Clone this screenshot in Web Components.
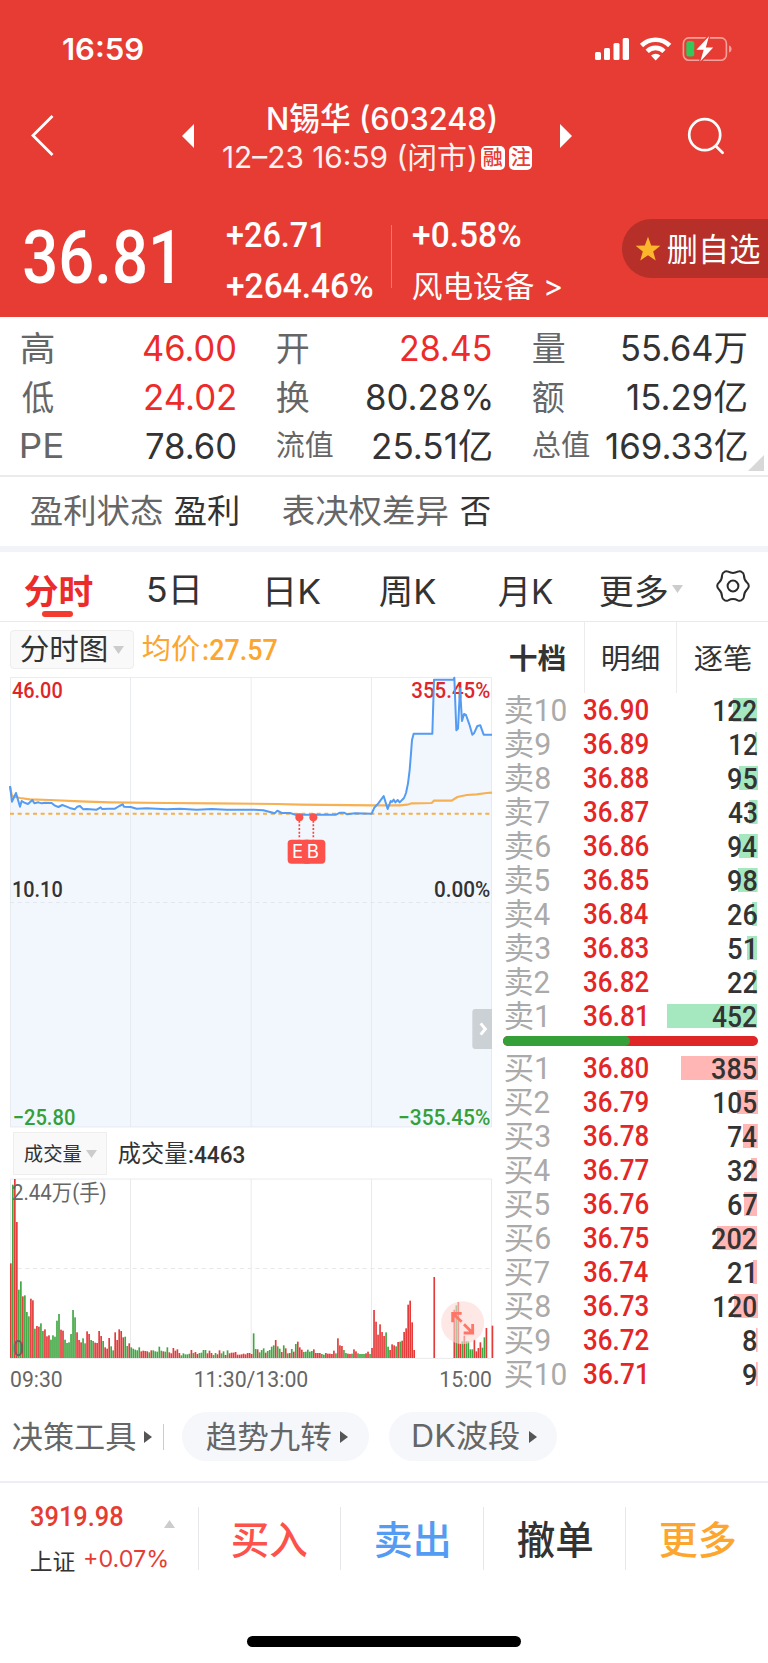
<!DOCTYPE html>
<html lang="zh-CN">
<head>
<meta charset="utf-8">
<title>N锡华 (603248)</title>
<style>
	body {
		margin: 0;
		background: #fff;
		color: #333;
		font-family: Inter, "Noto Sans CJK SC", sans-serif;
	}
</style>
</head>
<body>
<stock-page></stock-page>
<script>
const DIN = 'Roboto, "Noto Sans CJK SC", sans-serif';

// text squeezed or stretched so that its ink is `w` px wide
class FitText extends HTMLElement {
	constructor() {
		super();
		this.attachShadow({ mode: 'open' });
		this.shadowRoot.innerHTML = `
			<style>
				:host {
					display: block;
					flex: none;
					line-height: 1.2;
					white-space: nowrap;
				}
				span {
					display: inline-block;
					transform-origin: 0 50%;
				}
			</style>
			<span><slot></slot></span>
		`;
	}

	connectedCallback() {
		const w = Number(this.getAttribute('w'));
		const text = this.textContent;
		this.style.width = w + 'px';
		this.style.fontSize = this.getAttribute('size') + 'px';
		this.style.height = this.getAttribute('size') * 1.2 + 'px';
		this.style.fontWeight = this.getAttribute('weight') || 400;
		if (this.hasAttribute('din')) this.style.fontFamily = DIN;
		if (this.hasAttribute('color')) this.style.color = this.getAttribute('color');
		const cs = getComputedStyle(this);
		const ctx = FitText.ctx;
		ctx.font = `${cs.fontWeight} ${cs.fontSize} ${cs.fontFamily}`;
		const m = ctx.measureText(text);
		const k = w / (m.actualBoundingBoxLeft + m.actualBoundingBoxRight);
		// han glyphs sit a little high in a latin line box
		const han = /^[\u4e00-\u9fff]/.test(text);
		const dx = m.actualBoundingBoxLeft * k - (han ? .2 : 0);
		const dy = han ? .045 : this.hasAttribute('din') ? .025 : 0;
		this.shadowRoot.querySelector('span').style.transform = `translate(${dx}px, ${dy}em) scaleX(${k})`;
	}
}
FitText.ctx = document.createElement('canvas').getContext('2d');

class StatusBar extends HTMLElement {
	constructor() {
		super();
		this.attachShadow({ mode: 'open' });
		this.shadowRoot.innerHTML = `
			<style>
				:host {
					display: flex;
					align-items: center;
					justify-content: space-between;
					height: 98px;
					padding: 0 36px 0 63px;
					color: #fff;
				}
			</style>
			<fit-text w="80" size="30" weight="600">16:59</fit-text>
			<svg width="138" height="28" viewBox="594 35 138 28" fill="#fff">
				<rect x="595" y="52" width="6" height="8" rx="1.5"/>
				<rect x="604" y="48" width="6" height="12" rx="1.5"/>
				<rect x="613.5" y="43" width="6" height="17" rx="1.5"/>
				<rect x="622.7" y="38" width="6.3" height="22" rx="1.5"/>
				<g fill="none" stroke="#fff" stroke-width="4.6">
					<path d="M641.5 45.5a20 20 0 0 1 28.2 0"/>
					<path d="M647.2 51.3a12 12 0 0 1 16.8 0"/>
				</g>
				<path d="M651 55.5a7 7 0 0 1 9.4 0l-4.7 4.9z"/>
				<rect x="683.4" y="37.9" width="43" height="22.4" rx="5.5" fill="none" stroke="#f3a19c" stroke-width="1.6"/>
				<path d="M729 45.5c3.4.8 3.4 6.2 0 7z" fill="#f3a19c"/>
				<rect x="686.3" y="41" width="8" height="15.6" rx="2.5" fill="#34c759"/>
				<path d="M709 36.2l-12.6 13.6h7.3l-3.4 11.8 12.9-14.1h-7.4z" stroke="#e63c33" stroke-width="2.6" paint-order="stroke"/>
			</svg>
		`;
	}
}

class StockNav extends HTMLElement {
	constructor() {
		super();
		this.attachShadow({ mode: 'open' });
		this.shadowRoot.innerHTML = `
			<style>
				:host {
					display: flex;
					align-items: center;
					height: 76px;
					padding: 0 43px 0 30px;
					color: #fff;
				}
				svg { flex: none; }
				.prev { margin-left: 128px; }
				.title {
					display: flex;
					flex-direction: column;
					width: 309px;
					margin: 4px 28px 0 29px;
				}
				.title > div {
					display: flex;
					align-items: center;
					height: 39px;
				}
				.name { padding-left: 45px; }
				.time fit-text { opacity: .93; }
				.badge {
					display: flex;
					align-items: center;
					justify-content: center;
					width: 23.5px;
					height: 24px;
					margin-left: 6px;
					border-radius: 5px;
					background: #fff;
				}
				.badge + .badge { margin-left: 4px; }
				.badge fit-text { opacity: 1; }
				.search { margin-left: auto; }
			</style>
			<svg width="24" height="44" viewBox="30 114 24 44" fill="none" stroke="#fff" stroke-width="2.8"><path d="M52.5 116L33 135.5 52.5 155"/></svg>
			<svg class="prev" width="12" height="24" viewBox="0 0 12 24" fill="#fff"><path d="M12 0v24L0 12z"/></svg>
			<div class="title">
				<div class="name"><fit-text w="227.5" size="31.5" weight="500">N锡华 (603248)</fit-text></div>
				<div class="time">
					<fit-text w="252" size="29.5">12–23 16:59 (闭市)</fit-text>
					<span class="badge"><fit-text w="19.5" size="20.5" weight="500" color="#e63c33">融</fit-text></span>
					<span class="badge"><fit-text w="19.5" size="20.5" weight="500" color="#e63c33">注</fit-text></span>
				</div>
			</div>
			<svg width="12" height="24" viewBox="0 0 12 24" fill="#fff"><path d="M0 0v24l12-12z"/></svg>
			<svg class="search" width="38" height="38" viewBox="687 117 38 38" fill="none" stroke="#fff" stroke-width="2.7" stroke-linecap="round"><circle cx="704.7" cy="134.7" r="15.5"/><path d="M715.8 146l6.8 6.8"/></svg>
		`;
	}
}

class PriceSummary extends HTMLElement {
	constructor() {
		super();
		this.attachShadow({ mode: 'open' });
		this.shadowRoot.innerHTML = `
			<style>
				:host {
					display: flex;
					align-items: flex-start;
					height: 108px;
					padding: 35px 0 0 24px;
					color: #fff;
				}
				.price {
					display: flex;
					align-items: center;
					width: 151px;
					height: 95px;
				}
				.col {
					display: flex;
					flex-direction: column;
				}
				.col > * {
					display: flex;
					align-items: center;
					height: 51.3px !important;
					line-height: 51.3px;
				}
				.change { margin-left: 52px; width: 164px; }
				.rule {
					width: 1px;
					height: 63px;
					margin: 16px 21px 0 0;
					background: #ee7771;
				}
				.remove {
					display: flex;
					align-items: center;
					gap: 7px;
					box-sizing: border-box;
					width: 146px;
					height: 59px;
					margin: 10px 0 0 auto;
					padding-left: 12.5px;
					border-radius: 30px 0 0 30px;
					background: #b63029;
				}
			</style>
			<div class="price"><fit-text din w="148" size="74" weight="500">36.81</fit-text></div>
			<div class="col change">
				<fit-text din w="94" size="35.5" weight="500">+26.71</fit-text>
				<fit-text din w="145.5" size="35.5" weight="500">+264.46%</fit-text>
			</div>
			<div class="rule"></div>
			<div class="col">
				<fit-text din w="107.5" size="35.5" weight="500">+0.58%</fit-text>
				<fit-text w="148.5" size="30">风电设备 &gt;</fit-text>
			</div>
			<div class="remove">
				<svg width="26" height="26" viewBox="0 0 26 26" fill="#fdb52b"><path d="M13 .8l3.2 8.6 9.2.4-7.2 5.7 2.5 8.9L13 19.3l-7.7 5.1 2.5-8.9L.6 9.8l9.2-.4z"/></svg>
				<fit-text w="92" size="31.5">删自选</fit-text>
			</div>
		`;
	}
}

class QuoteGrid extends HTMLElement {
	constructor() {
		super();
		this.attachShadow({ mode: 'open' });
		// label, label width, label size, value, value width, rising
		const cells = [
			['高', 31.5, 34, '46.00', 91, 1], ['开', 32, 34, '28.45', 90, 1], ['量', 32, 34, '55.64万', 124],
			['低', 31.5, 34, '24.02', 90, 1], ['换', 32, 34, '80.28%', 124], ['额', 32, 34, '15.29亿', 119],
			['PE', 40.5, 34.5, '78.60', 89], ['流值', 56, 29, '25.51亿', 118], ['总值', 56.5, 29, '169.33亿', 140.5],
		];
		this.shadowRoot.innerHTML = `
			<style>
				:host {
					position: relative;
					display: grid;
					grid-template-columns: 213px 213.5px 213px;
					grid-auto-rows: 49px;
					column-gap: 42.5px;
					box-sizing: border-box;
					height: 160px;
					padding: 6px 0 0 21.5px;
					border-bottom: 2px solid #ebebed;
				}
				div {
					display: flex;
					align-items: center;
					justify-content: space-between;
				}
				svg {
					position: absolute;
					right: 4px;
					bottom: 4px;
				}
			</style>
			${cells.map(c => `<div><fit-text w="${c[1]}" size="${c[2]}" color="#666">${c[0]}</fit-text><fit-text w="${c[4]}" size="35"${c[5] ? ' color="#ec2b2b"' : ''}>${c[3]}</fit-text></div>`).join('')}
			<svg width="16" height="16" viewBox="0 0 16 16"><path d="M16 0v16H0z" fill="#d8d8d8"/></svg>
		`;
	}
}

class FactsRow extends HTMLElement {
	constructor() {
		super();
		this.attachShadow({ mode: 'open' });
		this.shadowRoot.innerHTML = `
			<style>
				:host {
					display: flex;
					align-items: center;
					box-sizing: border-box;
					height: 75px;
					padding: 0 0 2px 30.5px;
					border-bottom: 6px solid #f1f3f8;
				}
				.v { margin: 0 44px 0 13px; }
			</style>
			<fit-text w="131.5" size="33" color="#666">盈利状态</fit-text>
			<fit-text class="v" w="63.5" size="33">盈利</fit-text>
			<fit-text w="165" size="33" color="#666">表决权差异</fit-text>
			<fit-text class="v" w="29.5" size="33">否</fit-text>
		`;
	}
}

class PeriodTabs extends HTMLElement {
	constructor() {
		super();
		this.attachShadow({ mode: 'open' });
		this.shadowRoot.innerHTML = `
			<style>
				:host {
					position: relative;
					display: flex;
					align-items: center;
					box-sizing: border-box;
					height: 70px;
					padding: 6px 0 0 24.5px;
					border-bottom: 1px solid #e9e9ec;
				}
				.gear { margin: -8px 0 0 33px; }
				.caret { margin: -2px 0 0 5px; }
				i {
					position: absolute;
					left: 42px;
					bottom: 4px;
					width: 31px;
					height: 6px;
					border-radius: 3px;
					background: #f43b30;
				}
			</style>
			<fit-text w="68" size="34.5" weight="700" color="#ec2b2b">分时</fit-text>
			<fit-text style="margin-left:55.5px" w="49.5" size="34.5">5日</fit-text>
			<fit-text style="margin-left:70px" w="53" size="34.5">日K</fit-text>
			<fit-text style="margin-left:59.5px" w="56.5" size="34.5">周K</fit-text>
			<fit-text style="margin-left:62.5px" w="54.5" size="34.5">月K</fit-text>
			<fit-text style="margin-left:46px" w="67.5" size="34.5">更多</fit-text>
			<svg class="caret" width="11" height="8" viewBox="0 0 11 8"><path d="M0 0h11L5.5 8z" fill="#ccc"/></svg>
			<svg class="gear" width="34" height="34" viewBox="-17 -17 34 34" fill="none" stroke="#2b2b2b" stroke-width="2" stroke-linejoin="round">
				<circle r="5.4"/>
				<path d="M-8.5 -14.2Q-7 -15.3 -4.8 -14.3Q0 -11.8 4.8 -14.3Q7 -15.3 8.5 -14.2Q10.8 -13 10.9 -10.8Q11 -6.2 14 -3.4Q15.8 -1.8 15.8 0Q15.8 1.8 14 3.4Q11 6.2 10.9 10.8Q10.8 13 8.5 14.2Q7 15.3 4.8 14.3Q0 11.8 -4.8 14.3Q-7 15.3 -8.5 14.2Q-10.8 13 -10.9 10.8Q-11 6.2 -14 3.4Q-15.8 1.8 -15.8 0Q-15.8 -1.8 -14 -3.4Q-11 -6.2 -10.9 -10.8Q-10.8 -13 -8.5 -14.2z"/>
			</svg>
			<i></i>
		`;
	}
}

class PriceChart extends HTMLElement {
	constructor() {
		super();
		this.attachShadow({ mode: 'open' });
		// three units to a pixel
		const price = '30,528 36,575 48,549 60,590 65,573 73,578 84,582 97,570 103,580 115,577 125,580 135,578 155,579 165,587 175,591 187,585 200,590 212,595 224,598 232,590 240,588 250,598 260,597 290,599 302,592 306,597 325,596 345,596 358,588 368,583 372,590 392,591 410,596 440,595 500,598 540,596 590,599 635,597 680,599 760,599 790,601 810,606 824,610 832,602 845,609 870,609 885,614 940,614 1008,614 1020,608 1032,608 1042,613 1065,610 1115,611 1123,593 1135,580 1151,558 1163,597 1172,573 1176,576 1181,569 1186,577 1193,570 1199,577 1212,564 1218,549 1224,520 1229,480 1233,430 1236,390 1241,371 1297,371 1302,209 1361,209 1363,203 1369,361 1374,356 1380,235 1386,333 1392,312 1398,315 1408,343 1417,374 1422,370 1432,348 1441,346 1451,374 1476,374';
		const average = '30,530 36,558 60,564 90,568 150,570 240,574 330,577 500,579 640,580 830,582 900,584 1120,586 1200,586 1222,584 1235,580 1295,579 1302,572 1355,572 1372,561 1400,555 1430,553 1460,549 1476,548';
		this.shadowRoot.innerHTML = `
			<style>
				:host { display: block; height: 451px; margin-left: 10px; }
				svg { display: block; overflow: visible; }
				text { font: 500 67.5px ${DIN}; }
				.up { fill: #e0252a; }
				.down { fill: #36a038; }
				.mark { font: 400 56px Inter, sans-serif; fill: #fff; }
			</style>
			<svg width="482" height="451" viewBox="30 201 1446 1353">
				<path d="M${price.replace(/ /g, 'L')}V1551H30z" fill="#f2f7fe"/>
				<path d="M31.5 202.5H1474.5V1551H31.5zM391.5 202V1551M753.5 202V1551M1114.5 202V1551" fill="none" stroke="#e3e7ec" stroke-opacity=".8" stroke-width="3"/>
				<path d="M30 877.5H1476" stroke="#e3e6ea" stroke-width="3" stroke-dasharray="12 11"/>
				<path d="M30 611H1476" stroke="#f7ae45" stroke-width="6" stroke-dasharray="12 11"/>
				<text class="up" x="36" y="264" textLength="152" lengthAdjust="spacingAndGlyphs">46.00</text>
				<text class="up" x="1234" y="264" textLength="237" lengthAdjust="spacingAndGlyphs">355.45%</text>
				<polyline points="${average}" fill="none" stroke="#f7b052" stroke-width="6.5"/>
				<polyline points="${price}" fill="none" stroke="#539bf3" stroke-width="6" stroke-linejoin="round"/>
				<text x="36" y="861" fill="#333" textLength="152" lengthAdjust="spacingAndGlyphs">10.10</text>
				<text x="1302" y="861" fill="#333" textLength="169" lengthAdjust="spacingAndGlyphs">0.00%</text>
				<text class="down" x="38" y="1545" textLength="188" lengthAdjust="spacingAndGlyphs">−25.80</text>
				<text class="down" x="1194" y="1545" textLength="277" lengthAdjust="spacingAndGlyphs">−355.45%</text>
				<path d="M898 632V688M940 632V688" stroke="#f5473f" stroke-width="5" stroke-dasharray="6 5"/>
				<g fill="#fd524b"><circle cx="898" cy="622" r="12"/><circle cx="940" cy="622" r="12"/>
				<rect x="863" y="689" width="72" height="72" rx="11"/></g>
				<text class="mark" x="876" y="743">E</text>
				<rect x="906" y="689" width="70" height="72" rx="11" fill="#fd524b"/>
				<text class="mark" x="920" y="745">B</text>
				<path d="M1476 1197H1426Q1417 1197 1417 1206V1308Q1417 1317 1426 1317H1476z" fill="#ccd1d5"/>
				<path d="M1442 1240L1456 1257 1442 1274" fill="none" stroke="#fff" stroke-width="9"/>
			</svg>
		`;
	}
}

class VolumeChart extends HTMLElement {
	constructor() {
		super();
		this.attachShadow({ mode: 'open' });
		// one bar per minute, r = up, g = down, "-" = no trade
		const bars = `r284 g520 r537 r408 g205 g230 r185 g188 g138 g125 r178 r173 g88 r96 r94 g104 g81 r86 r65 r68 g55 g68 g64 g112 g132 r85 r82 g55 g45 g47
			g72 g144 g122 r77 r54 r47 g59 g44 r80 r72 g54 g51 r46 r45 r81 r66 g51 r32 r28 r60 g35 g23 r77 r54 r86 r81 r62 g64 g36 r44
			g32 g28 g25 g23 g32 r20 r22 r21 r20 g17 r23 g23 g20 g19 g34 g22 r20 g19 g32 r17 r14 r30 r22 r26 r15 g8 g14 g11 g11 g13
			r24 g15 r18 r12 g15 g16 g24 g24 r14 r22 r15 g9 g15 r11 r23 g14 g20 r9 g23 r14 r16 r16 r18 r10 r10 r11 r13 r11 r15 r15
			r12 g74 g27 r26 g17 g24 g29 r16 g21 g24 g34 g38 r54 g35 g28 r18 g38 r29 g14 r15 g27 r19 g42 r49 r32 r25 g18 g19 g25 g19
			g21 r26 r15 r15 r15 g12 g10 r15 r13 r13 r12 r22 g14 r59 r38 r36 g24 g15 r13 r12 g13 r26 r20 g14 g12 g12 g12 r14 r19 g12
			r30 r144 r109 r70 r101 r78 r66 g77 g34 r24 r41 r38 g35 r48 g49 r52 r78 r89 r160 r172 r107 r24 - - - - - - - - -
			r243 - - - - - - - - - r145 g158 r168 r43 g50 r67 g50 g50 g26 g26 r55 r20 r30 r47 g31 g62 r90 - - r97`.split(/\s+/);
		const shapes = bars.map((b, i) => {
			if (b === '-') return '';
			const h = Number(b.slice(1));
			return `<rect x="${(30 + i * 6.02).toFixed(2)}" y="${744 - h}" width="5" height="${h}" fill="${b[0] === 'r' ? '#e43a3a' : '#41a743'}"/>`;
		});
		this.shadowRoot.innerHTML = `
			<style>
				:host { display: block; margin-left: 10px; }
				svg { display: block; overflow: visible; }
				text { font: 400 66px ${DIN}; fill: #666; }
			</style>
			<svg width="482" height="214" viewBox="30 207 1446 642">
				<path d="M31.5 207H1474.5V745H31.5zM391.5 207V745M753.5 207V745M1114.5 207V745" fill="none" stroke="#e9eaec" stroke-width="3"/>
				<path d="M30 475.5H1476" stroke="#e6e8ea" stroke-width="3" stroke-dasharray="12 11"/>
				${shapes.join('')}
				<text x="36" y="269" textLength="284" lengthAdjust="spacingAndGlyphs">2.44万(手)</text>
				<text x="38" y="737" textLength="32" lengthAdjust="spacingAndGlyphs">0</text>
				<circle cx="1388" cy="638" r="64.5" fill="#fdd9d5" fill-opacity=".6"/>
				<path d="M1385 635L1358 610M1358 637V610H1385M1392 643L1418 669M1418 642V669H1391" fill="none" stroke="#ff7566" stroke-width="8.5"/>
				<text x="30" y="831" textLength="158" lengthAdjust="spacingAndGlyphs">09:30</text>
				<text x="581" y="831" textLength="344" lengthAdjust="spacingAndGlyphs">11:30/13:00</text>
				<text x="1318" y="831" textLength="158" lengthAdjust="spacingAndGlyphs">15:00</text>
			</svg>
		`;
	}
}

class ChartColumn extends HTMLElement {
	constructor() {
		super();
		this.attachShadow({ mode: 'open' });
		this.shadowRoot.innerHTML = `
			<style>
				:host { display: block; width: 492px; }
				.bar {
					display: flex;
					align-items: center;
					box-sizing: border-box;
				}
				.top { height: 55px; padding: 0 0 0 10px; }
				.sub { height: 51px; padding: 0 0 0 13px; }
				.chip {
					display: flex;
					align-items: center;
					box-sizing: border-box;
					border: 1px solid #eee;
					background: #f9f9f9;
				}
				.top .chip {
					gap: 6px;
					width: 124px;
					height: 39px;
					margin-right: 9px;
					padding-left: 10px;
					border-radius: 4px;
				}
				.sub .chip {
					gap: 5px;
					width: 94px;
					height: 43px;
					margin-right: 11px;
					padding-left: 9.5px;
				}
			</style>
			<div class="bar top">
				<div class="chip">
					<fit-text w="85.5" size="29">分时图</fit-text>
					<svg width="11" height="8" viewBox="0 0 11 8"><path d="M0 0h11L5.5 8z" fill="#ccc"/></svg>
				</div>
				<fit-text din w="57" size="28.5" color="#fca62f">均价</fit-text>
				<fit-text din style="margin-left:3px" w="74" size="29.5" weight="500" color="#fca62f">:27.57</fit-text>
			</div>
			<price-chart></price-chart>
			<div class="bar sub">
				<div class="chip">
					<fit-text w="57.5" size="19.5">成交量</fit-text>
					<svg width="11" height="8" viewBox="0 0 11 8"><path d="M0 0h11L5.5 8z" fill="#ccc"/></svg>
				</div>
				<fit-text din w="69" size="23.5">成交量</fit-text>
				<fit-text din style="margin-left:2px" w="55.5" size="24.5" weight="500">:4463</fit-text>
			</div>
			<volume-chart></volume-chart>
		`;
	}
}

class BookRow extends HTMLElement {
	constructor() {
		super();
		this.attachShadow({ mode: 'open' });
	}

	connectedCallback() {
		const label = this.getAttribute('label');
		const price = this.getAttribute('price');
		const qty = this.getAttribute('qty');
		const level = label.slice(1);
		const labelWidth = level === '10' ? 61 : level === '1' ? 41 : 45;
		const endsInOne = qty.endsWith('1');
		const qtyWidth = qty.length * 15.3 - 1.7 - (qty[0] === '1' ? 2 : 0) - (endsInOne ? 3.3 : 0);
		this.shadowRoot.innerHTML = `
			<style>
				:host {
					display: flex;
					align-items: center;
					height: 34px;
				}
				.label { width: 79px; }
				.qty {
					display: flex;
					align-items: center;
					justify-content: flex-end;
					box-sizing: border-box;
					width: 91px;
					height: 24px;
					margin-left: auto;
					padding-right: ${endsInOne ? 4.3 : 1}px;
					background: linear-gradient(${label[0] === '卖' ? '#a5e8c0, #a5e8c0' : '#ffb6b4, #ffb6b4'}) right / ${Math.max(1, qty * .2)}px 100% no-repeat;
				}
			</style>
			<div class="label"><fit-text din w="${labelWidth}" size="31" color="#aaa">${label}</fit-text></div>
			<fit-text din w="${price.endsWith('1') ? 61.5 : 64.5}" size="29.5" weight="500" color="#e42626">${price}</fit-text>
			<div class="qty"><fit-text din w="${qtyWidth}" size="30" weight="500">${qty}</fit-text></div>
		`;
	}
}

class OrderBook extends HTMLElement {
	constructor() {
		super();
		this.attachShadow({ mode: 'open' });
		const sell = [122, 12, 95, 43, 94, 98, 26, 51, 22, 452];
		const buy = [385, 105, 74, 32, 67, 202, 21, 120, 8, 9];
		this.shadowRoot.innerHTML = `
			<style>
				:host { display: block; width: 276px; }
				.tabs {
					display: grid;
					grid-template-columns: 93px 92px 91px;
					height: 71px;
				}
				.tabs > div {
					display: flex;
					align-items: center;
					justify-content: center;
					box-sizing: border-box;
					padding-top: 1px;
					border-right: 1px solid #ececef;
				}
				.tabs > div:last-child { border: 0; }
				.rows { padding: 0 10.5px 0 12.5px; }
				.ratio {
					display: flex;
					height: 10px;
					margin: 2.5px 10.5px 5px 11px;
					border-radius: 5px;
					background: #df2626;
				}
				.ratio i {
					width: 127px;
					border-radius: 5px;
					background: #36a038;
				}
			</style>
			<div class="tabs">
				<div><fit-text w="56" size="28.5" weight="700">十档</fit-text></div>
				<div><fit-text w="56" size="28.5">明细</fit-text></div>
				<div><fit-text w="56" size="28.5">逐笔</fit-text></div>
			</div>
			<div class="rows">${sell.map((q, i) => `<book-row label="卖${10 - i}" price="${(36.9 - i * .01).toFixed(2)}" qty="${q}"></book-row>`).join('')}</div>
			<div class="ratio"><i></i></div>
			<div class="rows">${buy.map((q, i) => `<book-row label="买${i + 1}" price="${(36.8 - i * .01).toFixed(2)}" qty="${q}"></book-row>`).join('')}</div>
		`;
	}
}

class ToolStrip extends HTMLElement {
	constructor() {
		super();
		this.attachShadow({ mode: 'open' });
		const arrow = '<svg width="8" height="12" viewBox="0 0 8 12"><path d="M0 0l8 6-8 6z" fill="#555"/></svg>';
		this.shadowRoot.innerHTML = `
			<style>
				:host {
					display: flex;
					align-items: center;
					box-sizing: border-box;
					height: 83px;
					padding: 0 0 8px 13px;
					border-bottom: 2.5px solid #eeeff6;
					color: #666;
				}
				fit-text { margin-top: -2px; }
				svg { flex: none; margin-left: 8px; }
				.rule {
					width: 1px;
					height: 26px;
					margin: 0 18.5px 0 11px;
					background: #ccc;
				}
				.pill {
					display: flex;
					align-items: center;
					box-sizing: border-box;
					height: 49px;
					padding-left: 24px;
					border-radius: 25px;
					background: #f5f7fb;
				}
			</style>
			<fit-text w="122.5" size="31">决策工具</fit-text>
			${arrow}
			<div class="rule"></div>
			<div class="pill" style="width:186.5px"><fit-text w="125" size="31">趋势九转</fit-text><span style="width:1px"></span>${arrow}</div>
			<div class="pill" style="width:168.5px;margin-left:20px"><fit-text w="106" size="31">DK波段</fit-text><span style="width:2px"></span>${arrow}</div>
		`;
	}
}

class TradeBar extends HTMLElement {
	constructor() {
		super();
		this.attachShadow({ mode: 'open' });
		this.shadowRoot.innerHTML = `
			<style>
				:host {
					display: flex;
					align-items: center;
					box-sizing: border-box;
					height: 113px;
					padding-bottom: 2px;
				}
				.index {
					display: grid;
					grid-template-columns: 133px auto;
					align-content: center;
					box-sizing: border-box;
					width: 197.5px;
					padding: 0 0 1px 30.5px;
				}
				.index > div {
					display: flex;
					align-items: center;
					height: 44.5px;
				}
				.index .sse {
					grid-column: span 2;
					gap: 10px;
				}
				.action {
					display: flex;
					align-items: center;
					justify-content: center;
					flex: 1;
					height: 63px;
					padding-left: 1px;
					box-sizing: border-box;
					border-left: 1.5px solid #e6e7ea;
				}
			</style>
			<div class="index">
				<div><fit-text din w="91.5" size="28.5" weight="500" color="#e63c33">3919.98</fit-text></div>
				<svg style="margin-top:26px" width="11" height="8" viewBox="0 0 11 8"><path d="M0 8h11L5.5 0z" fill="#ccc"/></svg>
				<div class="sse"><fit-text w="44" size="22.5">上证</fit-text><fit-text w="81.5" size="23" color="#e63c33">+0.07%</fit-text></div>
			</div>
			<div class="action"><fit-text w="75" size="39" weight="500" color="#fd524b">买入</fit-text></div>
			<div class="action"><fit-text w="73" size="39" weight="500" color="#539bf3">卖出</fit-text></div>
			<div class="action"><fit-text w="75" size="39" weight="500">撤单</fit-text></div>
			<div class="action"><fit-text w="75" size="39" weight="500" color="#fca62f">更多</fit-text></div>
		`;
	}
}

class StockPage extends HTMLElement {
	constructor() {
		super();
		this.attachShadow({ mode: 'open' });
		this.shadowRoot.innerHTML = `
			<style>
				:host {
					display: flex;
					flex-direction: column;
					width: 768px;
					height: 1663px;
					overflow: hidden;
				}
				header { background: #e63c33; }
				main { display: flex; height: 778px; }
				.home {
					width: 273.5px;
					height: 10.5px;
					margin: 40px auto 0;
					border-radius: 6px;
					background: #000;
				}
			</style>
			<header>
				<status-bar></status-bar>
				<stock-nav></stock-nav>
				<price-summary></price-summary>
			</header>
			<quote-grid></quote-grid>
			<facts-row></facts-row>
			<period-tabs></period-tabs>
			<main>
				<chart-column></chart-column>
				<order-book></order-book>
			</main>
			<tool-strip></tool-strip>
			<trade-bar></trade-bar>
			<div class="home"></div>
		`;
	}
}

customElements.define('status-bar', StatusBar);
customElements.define('stock-nav', StockNav);
customElements.define('price-summary', PriceSummary);
customElements.define('quote-grid', QuoteGrid);
customElements.define('facts-row', FactsRow);
customElements.define('period-tabs', PeriodTabs);
customElements.define('price-chart', PriceChart);
customElements.define('volume-chart', VolumeChart);
customElements.define('chart-column', ChartColumn);
customElements.define('book-row', BookRow);
customElements.define('order-book', OrderBook);
customElements.define('tool-strip', ToolStrip);
customElements.define('trade-bar', TradeBar);
customElements.define('stock-page', StockPage);
customElements.define('fit-text', FitText);
</script>
</body>
</html>
